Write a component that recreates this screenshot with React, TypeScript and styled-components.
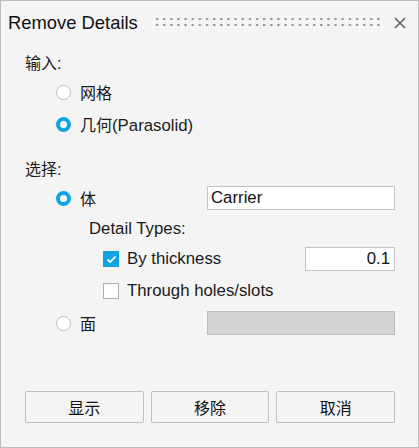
import React from "react";
import styled, { createGlobalStyle } from "styled-components";

const Global = createGlobalStyle`
  * { box-sizing: border-box; }
  html, body { margin: 0; padding: 0; background: #f4f4f4; }
  body {
    font-family: "Liberation Sans", Arial, "Noto Sans CJK SC", sans-serif;
    color: #1a1a1a;
  }
`;

const Frame = styled.div`
  width: 419px;
  height: 448px;
  border: 1px solid #bcbcbc;
  background: #f4f4f4;
  display: flex;
  flex-direction: column;
`;

const TitleBar = styled.div`
  height: 43px;
  display: flex;
  align-items: center;
  padding: 0 11px 0 7px;
`;

const Title = styled.div`
  font-size: 18.4px;
  color: #111;
  white-space: nowrap;
`;

const Grip = styled.div`
  margin-left: auto;
  width: 229px;
  height: 12px;
  background-image: radial-gradient(circle at 2px 2px, #959595 1.1px, transparent 1.4px);
  background-size: 7.15px 6px;
  background-position: 0 0;
`;

const CloseBtn = styled.button`
  margin-left: 9px;
  width: 14px;
  height: 13px;
  padding: 0;
  border: none;
  background: transparent;
  display: flex;
  align-items: center;
  justify-content: center;
`;

const Body = styled.div`
  flex: 1;
  display: flex;
  flex-direction: column;
  gap: 8px;
  padding: 8px 23px 24px 24px;
`;

const Label = styled.div<{ $indent?: number; $top?: number }>`
  height: 20px;
  display: flex;
  align-items: center;
  font-size: 16px;
  padding-left: ${(p) => p.$indent ?? 0}px;
  margin-top: ${(p) => p.$top ?? 0}px;
`;

const Latin = styled.span`
  font-size: 16.8px;
`;

const Row = styled.div<{ $indent: number }>`
  height: 24px;
  display: flex;
  align-items: center;
  padding-left: ${(p) => p.$indent}px;
  font-size: 16px;
`;

const Radio = styled.span<{ $on?: boolean }>`
  width: 15px;
  height: 15px;
  border-radius: 50%;
  flex: none;
  background: #fff;
  border: ${(p) => (p.$on ? "4.5px solid #12a3e3" : "1.5px solid #b9bec7")};
`;

const Check = styled.span<{ $on?: boolean }>`
  width: 16px;
  height: 16px;
  flex: none;
  display: flex;
  align-items: center;
  justify-content: center;
  background: ${(p) => (p.$on ? "#12a3e3" : "#fff")};
  border: ${(p) => (p.$on ? "none" : "1.5px solid #a9aeb9")};
`;

const Text = styled.span<{ $gap: number }>`
  margin-left: ${(p) => p.$gap}px;
  white-space: nowrap;
`;

const Field = styled.div<{ $width: number; $disabled?: boolean; $right?: boolean }>`
  margin-left: auto;
  width: ${(p) => p.$width}px;
  height: 24px;
  border: 1px solid ${(p) => (p.$disabled ? "#bdbdbd" : "#c3c3c3")};
  background: ${(p) => (p.$disabled ? "#d3d3d3" : "#fff")};
  display: flex;
  align-items: center;
  justify-content: ${(p) => (p.$right ? "flex-end" : "flex-start")};
  padding: 0 4px 0 3px;
  font-size: 16.8px;
  color: #111;
`;

const Buttons = styled.div`
  margin-top: auto;
  display: flex;
  gap: 7px;
`;

const Button = styled.button`
  width: 119px;
  height: 32px;
  border: 1px solid #bebebe;
  border-radius: 2px;
  background: #f4f4f4;
  font-family: "Noto Sans CJK SC", sans-serif;
  font-size: 16px;
  color: #111;
  padding: 0;
`;

export default function App() {
  return (
    <>
      <Global />
      <Frame>
        <TitleBar>
          <Title>Remove Details</Title>
          <Grip />
          <CloseBtn aria-label="close">
            <svg width="12" height="12" viewBox="0 0 12 12">
              <path d="M1 1 L11 11 M11 1 L1 11" stroke="#5f5f5f" strokeWidth="1.5" fill="none" />
            </svg>
          </CloseBtn>
        </TitleBar>
        <Body>
          <Label>输入:</Label>
          <Row $indent={31}>
            <Radio />
            <Text $gap={9}>网格</Text>
          </Row>
          <Row $indent={31}>
            <Radio $on />
            <Text $gap={9}>
              几何<Latin>(Parasolid)</Latin>
            </Text>
          </Row>
          <Label $top={14}>选择:</Label>
          <Row $indent={31}>
            <Radio $on />
            <Text $gap={9}>体</Text>
            <Field $width={188}>Carrier</Field>
          </Row>
          <Label $indent={64} $top={1}>
            <Latin>Detail Types:</Latin>
          </Label>
          <Row $indent={78}>
            <Check $on>
              <svg width="11" height="9" viewBox="0 0 11 9">
                <path d="M1.5 4.5 L4.2 7 L9.5 1.5" stroke="#fff" strokeWidth="1.8" fill="none" />
              </svg>
            </Check>
            <Text $gap={8}>
              <Latin>By thickness</Latin>
            </Text>
            <Field $width={90} $right>0.1</Field>
          </Row>
          <Row $indent={78}>
            <Check />
            <Text $gap={8}>
              <Latin>Through holes/slots</Latin>
            </Text>
          </Row>
          <Row $indent={31}>
            <Radio />
            <Text $gap={9}>面</Text>
            <Field $width={188} $disabled />
          </Row>
          <Buttons>
            <Button>显示</Button>
            <Button>移除</Button>
            <Button>取消</Button>
          </Buttons>
        </Body>
      </Frame>
    </>
  );
}
